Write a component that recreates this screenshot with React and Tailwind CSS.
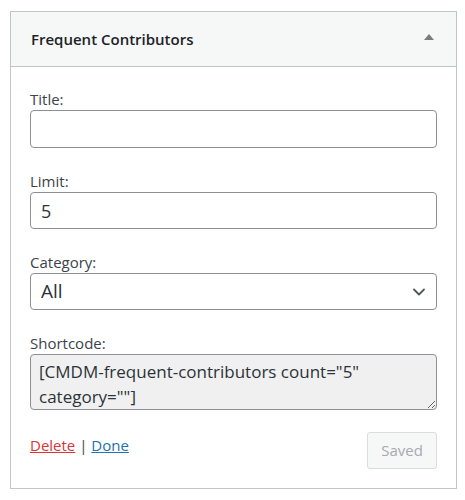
import { ChevronDown } from 'lucide-react';

const font = { fontFamily: '"Open Sans", "Noto Sans", sans-serif' };

function Field({ label, children, first }) {
  return (
    <div className={first ? '' : 'mt-[22px]'}>
      <label className="block text-[15px] leading-[22px] text-[#3c434a]">{label}</label>
      {children}
    </div>
  );
}

export default function App() {
  return (
    <div className="min-h-[500px] bg-white pt-[11px] pl-[10px]" style={font}>
      <div className="w-[447px] border border-[#c3c4c7] bg-white">
        <div className="flex h-[55px] items-center justify-between border-b border-[#c3c4c7] bg-[#f6f7f7] pl-[20px] pr-[22px]">
          <h3 className="text-[15px] font-semibold text-[#1d2327]">Frequent Contributors</h3>
          <span className="mt-[-4px] h-0 w-0 border-x-[5px] border-b-[6px] border-x-transparent border-b-[#787c82]" />
        </div>

        <div className="px-[19px] pt-[21px] pb-[19px]">
          <Field label="Title:" first>
            <input
              type="text"
              className="h-[38px] w-full rounded-[4px] border border-[#8c8f94] px-[10px] text-[18px] text-[#2c3338] outline-none"
              defaultValue=""
            />
          </Field>

          <Field label="Limit:">
            <input
              type="text"
              className="h-[37px] w-full rounded-[4px] border border-[#8c8f94] px-[10px] text-[18px] text-[#2c3338] outline-none"
              defaultValue="5"
            />
          </Field>

          <Field label="Category:">
            <div className="relative">
              <select className="h-[37px] w-full appearance-none rounded-[4px] border border-[#8c8f94] bg-white pl-[10px] text-[19px] text-[#2c3338] outline-none">
                <option>All</option>
              </select>
              <ChevronDown
                className="pointer-events-none absolute top-[9px] right-[8px] text-[#50575e]"
                size={20}
                strokeWidth={2.2}
              />
            </div>
          </Field>

          <Field label="Shortcode:">
            <textarea
              readOnly
              className="block h-[56px] w-full rounded-[4px] border border-[#8c8f94] bg-[#f0f0f1] px-[8px] pt-[4px] text-[17px] leading-[25px] text-[#2c3338] outline-none"
              value={'[CMDM-frequent-contributors count="5" category=""]'}
            />
          </Field>

          <div className="mt-[22px] flex items-start justify-between">
            <div className="pt-[1px] text-[15px] leading-[24px] text-[#3c434a]">
              <a href="#" className="text-[#d63638] underline">Delete</a>
              {' | '}
              <a href="#" className="text-[#2271b1] underline">Done</a>
            </div>
            <button
              type="button"
              disabled
              className="h-[37px] w-[70px] rounded-[3px] border border-[#dcdcde] bg-[#f6f7f7] text-[15px] text-[#a7aaad]"
            >
              Saved
            </button>
          </div>
        </div>
      </div>
    </div>
  );
}
